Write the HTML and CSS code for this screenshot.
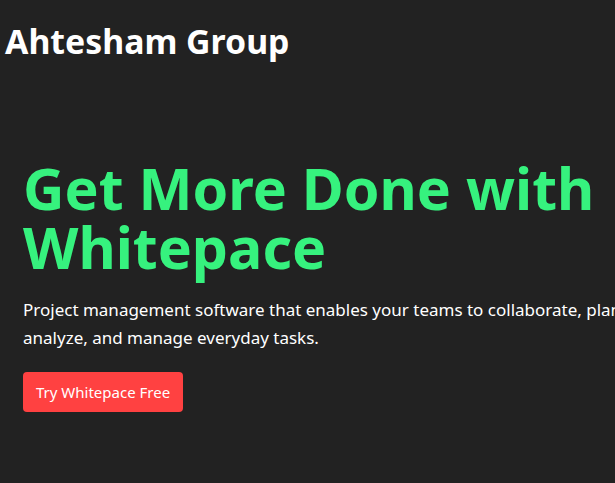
FILE: index.html
```html
<!DOCTYPE html>
<html lang="en">
<head>
<meta charset="utf-8">
<title>Ahtesham Group</title>
<link rel="stylesheet" href="styles.css">
</head>
<body>
<header class="site-header">
  <div class="brand">Ahtesham Group</div>
</header>
<main class="hero">
  <h1 class="hero-title">Get More Done with Whitepace</h1>
  <p class="hero-text">Project management software that enables your teams to collaborate, plan, analyze, and manage everyday tasks.</p>
  <a class="cta" href="#">Try Whitepace Free</a>
</main>
</body>
</html>
```

FILE: styles.css
```css
html, body {
  margin: 0;
  padding: 0;
  background: #222222;
  overflow: hidden;
}
body {
  font-family: "Noto Sans", "Open Sans", sans-serif;
  color: #ffffff;
  width: 660px;
}
.site-header {
  padding: 19px 0 0 5px;
}
.brand {
  font-size: 33.8px;
  font-weight: 700;
  line-height: 44px;
}
.hero {
  display: flex;
  flex-direction: column;
  align-items: flex-start;
  padding: 96px 0 0 23px;
}
.hero-title {
  margin: 0;
  font-size: 57.3px;
  line-height: 59px;
  font-weight: 700;
  color: #36f27e;
}
.hero-text {
  margin: 19px 0 0;
  font-size: 17px;
  line-height: 28px;
}
.cta {
  margin-top: 20px;
  background: #ff4141;
  color: #fff;
  text-decoration: none;
  font-size: 15px;
  line-height: 40px;
  padding: 0 13px;
  border-radius: 4px;
}
```
